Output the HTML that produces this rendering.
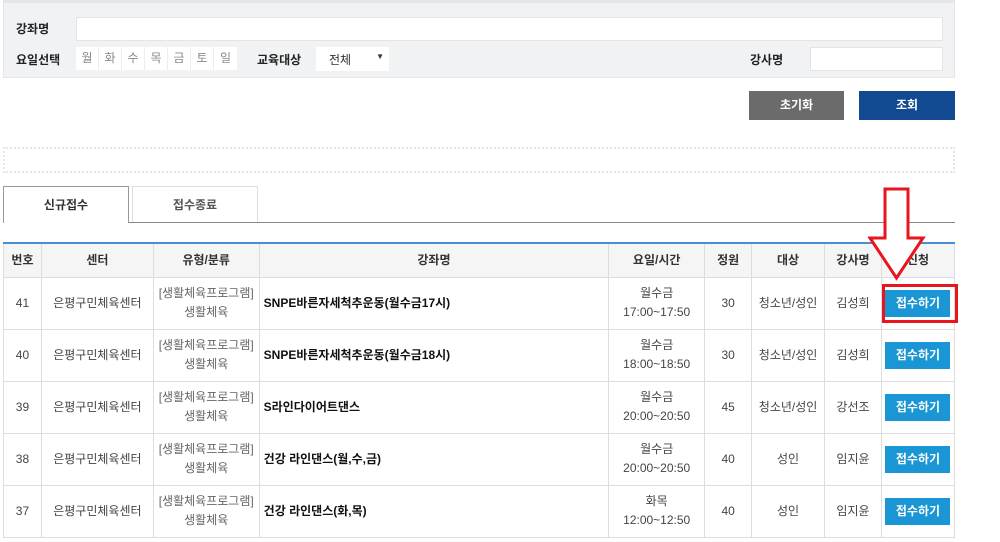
<!DOCTYPE html>
<html><head><meta charset="utf-8"><style>
*{box-sizing:border-box;margin:0;padding:0}
body{width:1000px;height:542px;overflow:hidden;background:#fff;font-family:"Liberation Sans","Noto Sans CJK KR",sans-serif;font-size:12px;color:#333;position:relative}
.a{position:absolute}
.lbl{font-weight:bold;color:#222;font-size:12px}
.inp{background:#fff;border:1px solid #e3e4e6}
.day{position:absolute;top:47px;width:23px;height:23px;background:#fff;border-right:1px solid #eee;color:#888;text-align:center;line-height:23px;font-size:12px}
.btn{position:absolute;top:91px;height:29px;color:#fff;text-align:center;line-height:29px;font-size:12px;font-weight:bold}
table{position:absolute;left:3px;top:242px;width:952px;border-collapse:collapse;border-top:2px solid #4a8fd6}
td,th{border:1px solid #ddd;text-align:center;font-size:12px;color:#444;line-height:19px}
th{background:#f5f5f5;height:34px;font-weight:bold;color:#333}
td{height:52px}
td.t{text-align:left;padding-left:4px;font-weight:bold;color:#111}
td.ty{color:#666}
.sb{display:inline-block;width:65px;height:27px;line-height:27px;background:#1996d3;color:#fff;font-weight:bold}
</style></head><body>
<div class="a" style="left:3px;top:0;width:952px;height:78px;background:#f1f2f4;border:1px solid #e4e5e7;border-top:3px solid #e4e5e7"></div>
<div class="a lbl" style="left:16px;top:20px">강좌명</div>
<div class="a inp" style="left:76px;top:17px;width:867px;height:24px"></div>
<div class="a lbl" style="left:16px;top:51px">요일선택</div>
<div class="day" style="left:76px">월</div><div class="day" style="left:99px">화</div><div class="day" style="left:122px">수</div><div class="day" style="left:145px">목</div><div class="day" style="left:168px">금</div><div class="day" style="left:191px">토</div><div class="day" style="left:214px;border:none">일</div>
<div class="a lbl" style="left:257px;top:51px">교육대상</div>
<div class="a" style="left:316px;top:47px;width:73px;height:24px;background:#fff;padding:4px 0 0 13px">전체<span style="position:absolute;right:5px;top:5px;font-size:8px">▼</span></div>
<div class="a lbl" style="left:750px;top:51px">강사명</div>
<div class="a inp" style="left:810px;top:47px;width:133px;height:24px"></div>
<div class="btn" style="left:749px;width:95px;background:#6b6b6b">초기화</div>
<div class="btn" style="left:859px;width:96px;background:#124a92">조회</div>
<div class="a" style="left:3px;top:147px;width:952px;height:26px;border:2px dotted #e6e6e6"></div>
<div class="a" style="left:3px;top:186px;width:126px;height:37px;background:#fff;border:1px solid #999;border-bottom:none;text-align:center;line-height:37px;font-weight:bold;z-index:2">신규접수</div>
<div class="a" style="left:132px;top:186px;width:126px;height:36px;border:1px solid #ddd;border-bottom:none;text-align:center;line-height:36px;font-weight:bold;color:#555">접수종료</div>
<div class="a" style="left:3px;top:222px;width:952px;height:1px;background:#888"></div>
<table>
<colgroup><col style="width:38px"><col style="width:112px"><col style="width:106px"><col style="width:350px"><col style="width:96px"><col style="width:47px"><col style="width:73px"><col style="width:57px"><col style="width:73px"></colgroup>
<tr><th>번호</th><th>센터</th><th>유형/분류</th><th>강좌명</th><th>요일/시간</th><th>정원</th><th>대상</th><th>강사명</th><th>신청</th></tr>
<tr><td>41</td><td>은평구민체육센터</td><td class="ty">[생활체육프로그램]<br>생활체육</td><td class="t">SNPE바른자세척추운동(월수금17시)</td><td>월수금<br>17:00~17:50</td><td>30</td><td>청소년/성인</td><td>김성희</td><td><span class="sb">접수하기</span></td></tr>
<tr><td>40</td><td>은평구민체육센터</td><td class="ty">[생활체육프로그램]<br>생활체육</td><td class="t">SNPE바른자세척추운동(월수금18시)</td><td>월수금<br>18:00~18:50</td><td>30</td><td>청소년/성인</td><td>김성희</td><td><span class="sb">접수하기</span></td></tr>
<tr><td>39</td><td>은평구민체육센터</td><td class="ty">[생활체육프로그램]<br>생활체육</td><td class="t">S라인다이어트댄스</td><td>월수금<br>20:00~20:50</td><td>45</td><td>청소년/성인</td><td>강선조</td><td><span class="sb">접수하기</span></td></tr>
<tr><td>38</td><td>은평구민체육센터</td><td class="ty">[생활체육프로그램]<br>생활체육</td><td class="t">건강 라인댄스(월,수,금)</td><td>월수금<br>20:00~20:50</td><td>40</td><td>성인</td><td>임지윤</td><td><span class="sb">접수하기</span></td></tr>
<tr><td>37</td><td>은평구민체육센터</td><td class="ty">[생활체육프로그램]<br>생활체육</td><td class="t">건강 라인댄스(화,목)</td><td>화목<br>12:00~12:50</td><td>40</td><td>성인</td><td>임지윤</td><td><span class="sb">접수하기</span></td></tr>
</table>
<div class="a" style="left:882px;top:284px;width:76px;height:39px;border:3px solid #e8141e"></div>
<svg class="a" style="left:868px;top:186px" width="60" height="96"><path d="M17 3H40V52H55L28.5 92L2 52H17Z" fill="#fff" stroke="#e8141e" stroke-width="3"/></svg>
</body></html>
